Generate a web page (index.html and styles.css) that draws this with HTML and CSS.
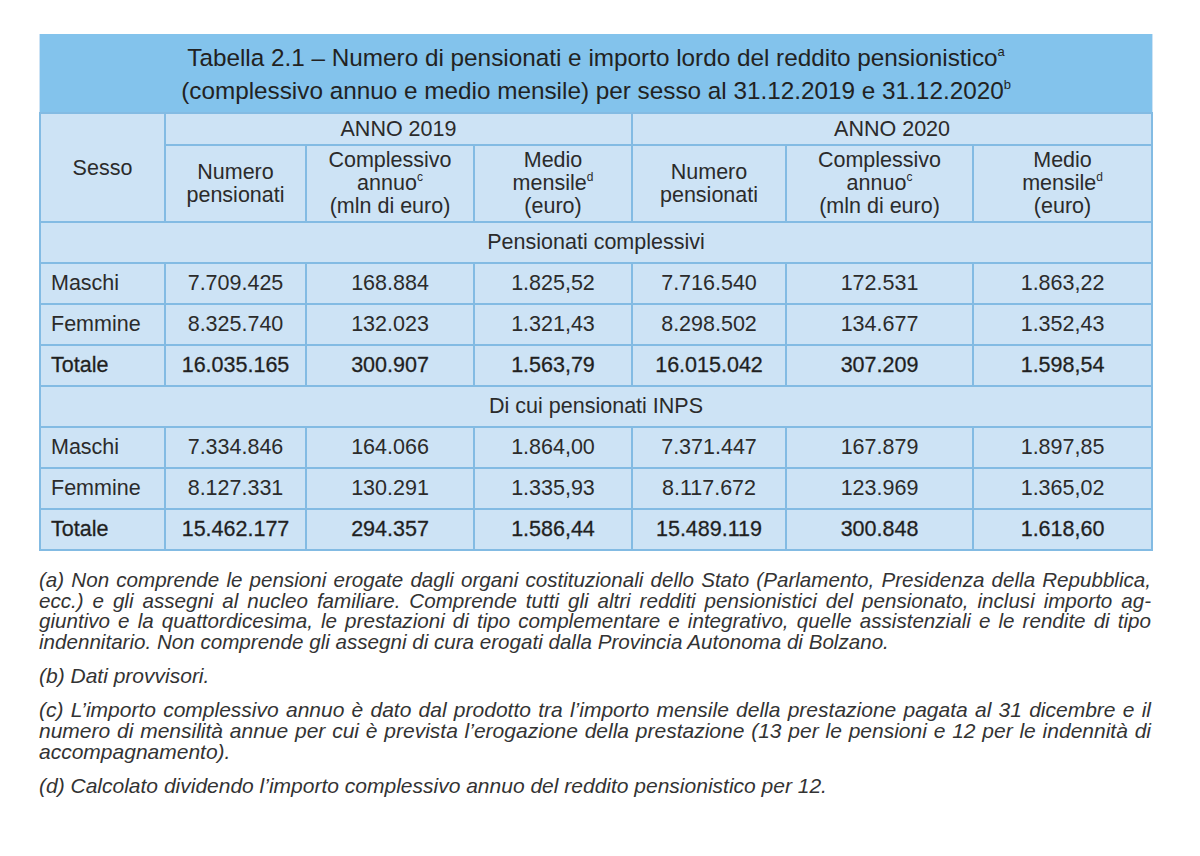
FILE: index.html
```html
<!DOCTYPE html>
<html lang="it">
<head>
<meta charset="utf-8">
<title>Tabella 2.1</title>
<link rel="stylesheet" href="styles.css">
</head>
<body>
<div class="page">
  <table class="tab">
    <colgroup>
      <col class="c-sesso">
      <col class="c-num">
      <col class="c-comp">
      <col class="c-med">
      <col class="c-num2">
      <col class="c-comp2">
      <col class="c-med2">
    </colgroup>
    <thead>
      <tr class="r-title">
        <th colspan="7">Tabella 2.1 – Numero di pensionati e importo lordo del reddito pensionistico<sup>a</sup><br>(complessivo annuo e medio mensile) per sesso al 31.12.2019 e 31.12.2020<sup>b</sup></th>
      </tr>
      <tr class="r-anno">
        <th rowspan="2" class="sesso">Sesso</th>
        <th colspan="3">ANNO 2019</th>
        <th colspan="3">ANNO 2020</th>
      </tr>
      <tr class="r-sub">
        <th>Numero<br>pensionati</th>
        <th>Complessivo<br>annuo<sup>c</sup><br>(mln di euro)</th>
        <th>Medio<br>mensile<sup>d</sup><br>(euro)</th>
        <th>Numero<br>pensionati</th>
        <th>Complessivo<br>annuo<sup>c</sup><br>(mln di euro)</th>
        <th>Medio<br>mensile<sup>d</sup><br>(euro)</th>
      </tr>
    </thead>
    <tbody>
      <tr class="r-sec"><td colspan="7">Pensionati complessivi</td></tr>
      <tr><td class="lab">Maschi</td><td>7.709.425</td><td>168.884</td><td>1.825,52</td><td>7.716.540</td><td>172.531</td><td>1.863,22</td></tr>
      <tr><td class="lab">Femmine</td><td>8.325.740</td><td>132.023</td><td>1.321,43</td><td>8.298.502</td><td>134.677</td><td>1.352,43</td></tr>
      <tr class="tot"><td class="lab">Totale</td><td>16.035.165</td><td>300.907</td><td>1.563,79</td><td>16.015.042</td><td>307.209</td><td>1.598,54</td></tr>
      <tr class="r-sec"><td colspan="7">Di cui pensionati INPS</td></tr>
      <tr><td class="lab">Maschi</td><td>7.334.846</td><td>164.066</td><td>1.864,00</td><td>7.371.447</td><td>167.879</td><td>1.897,85</td></tr>
      <tr><td class="lab">Femmine</td><td>8.127.331</td><td>130.291</td><td>1.335,93</td><td>8.117.672</td><td>123.969</td><td>1.365,02</td></tr>
      <tr class="tot"><td class="lab">Totale</td><td>15.462.177</td><td>294.357</td><td>1.586,44</td><td>15.489.119</td><td>300.848</td><td>1.618,60</td></tr>
    </tbody>
  </table>

  <div class="notes">
    <p class="na">(a) Non comprende le pensioni erogate dagli organi costituzionali dello Stato (Parlamento, Presidenza della Repubblica, ecc.) e gli assegni al nucleo familiare. Comprende tutti gli altri redditi pensionistici del pensionato, inclusi importo ag­giuntivo e la quattordicesima, le prestazioni di tipo complementare e integrativo, quelle assistenziali e le rendite di tipo indennitario. Non comprende gli assegni di cura erogati dalla Provincia Autonoma di Bolzano.</p>
    <p>(b) Dati provvisori.</p>
    <p>(c) L’importo complessivo annuo è dato dal prodotto tra l’importo mensile della prestazione pagata al 31 dicembre e il numero di mensilità annue per cui è prevista l’erogazione della prestazione (13 per le pensioni e 12 per le indennità di accompagnamento).</p>
    <p>(d) Calcolato dividendo l’importo complessivo annuo del reddito pensionistico per 12.</p>
  </div>
</div>
</body>
</html>
```

FILE: styles.css
```css
html, body {
  margin: 0;
  padding: 0;
  background: #ffffff;
}

.page {
  padding: 34px 0 0 39px;
  width: 1112px;
  font-family: "Liberation Sans", Arial, sans-serif;
  color: #2b2b2b;
}

.tab {
  width: 1112px;
  border-collapse: collapse;
  table-layout: fixed;
  background: #cde3f5;
  font-size: 21.5px;
}

.c-sesso { width: 125px; }
.c-num { width: 141px; }
.c-comp { width: 168px; }
.c-med { width: 158px; }
.c-num2 { width: 154px; }
.c-comp2 { width: 187px; }
.c-med2 { width: 179px; }

.tab th,
.tab td {
  border: 2px solid #83bbe3;
  padding: 0;
  text-align: center;
  font-weight: normal;
  vertical-align: middle;
}

.tab sup {
  font-size: 12px;
  line-height: 0;
  position: relative;
  top: -1px;
  vertical-align: super;
}

.r-title th {
  background: #83c3ec;
  height: 76px;
  font-size: 24.3px;
  line-height: 33px;
  color: #222;
  padding-top: 2px;
  border-top: none;
  border-left: none;
  border-right: none;
}

.r-title sup {
  font-size: 13px;
}

.r-anno th {
  height: 30px;
  line-height: 28px;
}

.r-sub th {
  height: 75px;
  line-height: 23px;
}

.r-sec td {
  height: 40px;
}

.tab tbody tr td {
  height: 39px;
}

.tab td.lab {
  text-align: left;
  padding-left: 10px;
}

.tot td {
  -webkit-text-stroke: 0.3px #2b2b2b;
  color: #1e1e1e;
}

.notes {
  margin-top: 19px;
  font-style: italic;
  font-size: 21px;
  line-height: 21px;
  color: #333;
}

.notes p {
  margin: 0 0 13px 0;
  text-align: justify;
  hyphens: manual;
}

.notes p.na {
  font-size: 20.6px;
  line-height: 20.5px;
}
```
